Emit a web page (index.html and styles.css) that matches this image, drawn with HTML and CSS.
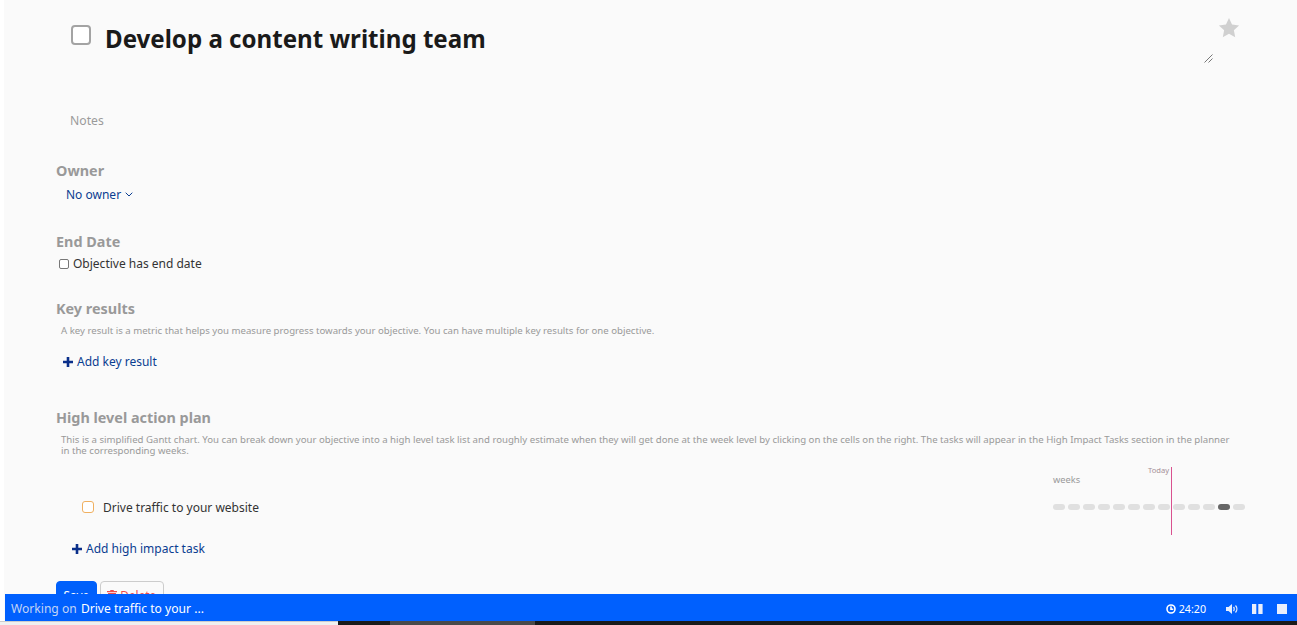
FILE: index.html
```html
<!DOCTYPE html>
<html lang="en">
<head>
<meta charset="utf-8">
<title>Develop a content writing team</title>
<link rel="stylesheet" href="styles.css">
</head>
<body>
<div class="viewport">
  <main class="page">
    <header class="title-row">
      <span class="title-check"></span>
      <h1 class="title">Develop a content writing team</h1>
      <div class="title-side">
        <svg class="star" viewBox="0 0 24 24" width="22" height="22"><path d="M12 1.2l3.3 7.1 7.7.9-5.7 5.3 1.5 7.7L12 18.4l-6.8 3.8 1.5-7.7L1 9.2l7.7-.9z"/></svg>
        <svg class="grip" viewBox="0 0 9 9" width="9" height="9"><path d="M0.5 8.5L8.500 0.5M4.500 8.500L8.500 4.500"/></svg>
      </div>
    </header>
    <p class="notes">Notes</p>

    <section class="owner">
      <h2 class="label">Owner</h2>
      <a class="link owner-link">No owner <svg class="chev" viewBox="0 0 8 5" width="8" height="5"><path d="M0.700 0.700L4 4L7.300 0.700"/></svg></a>
    </section>

    <section class="end-date">
      <h2 class="label">End Date</h2>
      <label class="check-line"><span class="small-check"></span>Objective has end date</label>
    </section>

    <section class="key-results">
      <h2 class="label">Key results</h2>
      <p class="help">A key result is a metric that helps you measure progress towards your objective. You can have multiple key results for one objective.</p>
      <a class="link add add-key"><svg class="plus" viewBox="0 0 10 10" width="10" height="10"><path d="M3.700 0h2.600v3.700H10v2.600H6.300V10H3.700V6.300H0V3.700h3.700z"/></svg>Add key result</a>
    </section>

    <section class="plan">
      <h2 class="label">High level action plan</h2>
      <p class="help help-wide">This is a simplified Gantt chart. You can break down your objective into a high level task list and roughly estimate when they will get done at the week level by clicking on the cells on the right. The tasks will appear in the High Impact Tasks section in the planner in the corresponding weeks.</p>
      <div class="gantt">
        <div class="task">
          <span class="task-check"></span>
          <span class="task-name">Drive traffic to your website</span>
        </div>
        <div class="chart">
          <span class="today">Today</span>
          <span class="today-line"></span>
          <span class="weeks">weeks</span>
          <div class="cells">
            <i class="cell"></i><i class="cell"></i><i class="cell"></i><i class="cell"></i><i class="cell"></i><i class="cell"></i><i class="cell"></i><i class="cell"></i><i class="cell"></i><i class="cell"></i><i class="cell"></i><i class="cell cell-on"></i><i class="cell"></i>
          </div>
        </div>
      </div>
      <a class="link add add-task"><svg class="plus" viewBox="0 0 10 10" width="10" height="10"><path d="M3.700 0h2.600v3.700H10v2.600H6.300V10H3.700V6.300H0V3.700h3.700z"/></svg>Add high impact task</a>
    </section>

    <div class="actions">
      <button class="btn btn-save">Save</button>
      <button class="btn btn-delete"><svg class="trash" viewBox="0 0 10 11" width="10" height="11"><path d="M3.500 0h3l.5 1h3v1.300H0V1h3zM1 3h8l-.6 8H1.600z"/></svg> Delete</button>
    </div>
  </main>

  <footer class="status">
    <div class="working"><span class="working-label">Working on</span> <span class="working-task">Drive traffic to your ...</span></div>
    <div class="controls">
      <span class="timer"><svg class="clock" viewBox="0 0 10 10" width="10" height="10"><circle cx="5" cy="5" r="4"/><path d="M5 2.500V5.300H7.300"/></svg>24:20</span>
      <svg class="ctl-volume" viewBox="0 0 12 10" width="12" height="10"><path class="fill" d="M0 3h2.500L6 0v10L2.500 7H0z"/><path class="wave" d="M7.500 3c.9 1 .9 3 0 4M9.500 1.500c1.800 2 1.800 5 0 7"/></svg>
      <svg class="ctl-pause" viewBox="0 0 11 10" width="11" height="10"><path class="fill" d="M0 0h4.300v10H0zM6.300 0h4.300v10H6.300z"/></svg>
      <svg class="ctl-stop" viewBox="0 0 10 10" width="10" height="10"><path class="fill" d="M0 0h10v10H0z"/></svg>
    </div>
  </footer>

  <div class="taskbar">
    <span class="tb-light"></span>
    <span class="tb-dark"></span>
    <span class="tb-mid"></span>
    <span class="tb-rest"></span>
  </div>
</div>
</body>
</html>
```
FILE: styles.css
```css
* { box-sizing: border-box; }
html, body { margin: 0; padding: 0; height: 100%; overflow: hidden; background: #fff; }
body { font-family: "Noto Sans", "Open Sans", "Liberation Sans", sans-serif; color: #212529; }
.viewport { position: relative; width: 1297px; height: 625px; overflow: hidden; }
.page {
  height: 625px;
  margin-left: 4px;
  padding: 0 52px;
  background: #fafafa;
  overflow: hidden;
}
.title-row { display: flex; align-items: flex-start; height: 92px; padding-left: 15px; }
.title-check {
  flex: none; width: 20px; height: 20px; margin-top: 25px;
  border: 2px solid #a3a3a3; border-radius: 4px; background: #fff;
}
.title {
  margin: 22px 0 0 14px; font-size: 24.100px; line-height: 34px; font-weight: 700; color: #1a1a1a;
}
.title-side { position: relative; margin-left: auto; width: 70px; height: 70px; }
.star { position: absolute; right: 5px; top: 17px; fill: #d0d0d0; }
.grip { position: absolute; left: 29px; top: 54px; fill: none; stroke: #555; stroke-width: 0.8; }
.notes { margin: 0 0 0 14px; height: 58px; padding-top: 20px; font-size: 12.200px; line-height: 17px; color: #9a9a9a; }
.label { margin: 0; font-size: 14.400px; line-height: 19px; font-weight: 700; color: #999; }
.owner { height: 82px; padding-top: 11px; }
.link { color: #0a3d91; font-size: 12px; line-height: 17px; }
.owner-link { display: block; margin: 6px 0 0 10px; }
.chev { fill: none; stroke: #0a3d91; stroke-width: 1; vertical-align: 2px; margin-left: 1px; }
.end-date { height: 67px; }
.check-line { display: flex; align-items: center; margin: 4px 0 0 3px; font-size: 12px; line-height: 17px; color: #333; }
.small-check {
  width: 10px; height: 10px; margin-right: 4px;
  border: 1px solid #777; border-radius: 2px; background: #fff;
}
.help { margin: 7px 0 0 5px; font-size: 9.650px; line-height: 11px; color: #999; }
.help-wide { width: 1175px; }
.key-results { height: 109px; }
.add { display: flex; align-items: center; }
.plus { fill: #0a2f8a; margin-right: 4px; }
.add-key { margin: 17px 0 0 7px; }
.gantt { display: flex; align-items: flex-start; height: 62px; margin-top: 9px; }
.task { display: flex; align-items: center; margin: 34px 0 0 26px; }
.task-check {
  width: 12px; height: 12px; margin: 0 9px 2px 0;
  border: 1px solid #f0b060; border-radius: 3px; background: #fff;
}
.task-name { font-size: 12px; line-height: 17px; color: #333; }
.chart { position: relative; flex: none; margin-left: auto; width: 192px; height: 70px; }
.today { position: absolute; left: 95px; top: 0; font-size: 7.600px; line-height: 10px; color: #a58f98; }
.today-line { position: absolute; left: 118px; top: 2px; width: 1px; height: 68px; background: #d9518f; }
.weeks { position: absolute; left: 0; top: 8px; font-size: 9.300px; line-height: 13px; color: #999; }
.cells { position: absolute; left: 0; top: 39px; display: flex; gap: 3px; }
.cell { display: block; width: 12px; height: 6px; border-radius: 3px; background: #e0e0e0; }
.cell-on { background: #666; }
.add-task { margin: 13px 0 0 16px; }
.actions { display: flex; gap: 3px; margin-top: 24px; }
.btn { height: 28px; padding: 0 6.500px; border-radius: 4px; font-family: inherit; font-size: 11.800px; }
.btn-save { border: 1px solid #0060fb; background: #0060fb; color: #fff; }
.btn-delete { border: 1px solid #ccc; background: #fafafa; color: #ee4d4d; }
.trash { fill: #ee4d4d; vertical-align: -1px; }
.status {
  position: absolute; left: 5px; right: 0; top: 594px; height: 27px;
  display: flex; align-items: center; justify-content: space-between;
  padding: 2px 10px 0 6px;
  background: #0060fe; color: #fff; font-size: 12.100px;
}
.working-label { color: #c3d4f5; }
.working-task { margin-left: 1px; }
.controls { display: flex; align-items: center; gap: 14px; }
.timer { display: flex; align-items: center; gap: 3px; margin-right: 6px; font-size: 10.700px; }
.clock { fill: none; stroke: #fff; stroke-width: 1.600; }
.fill { fill: #e8eefc; }
.wave { fill: none; stroke: #e8eefc; stroke-width: 1.300; }
.taskbar { position: absolute; left: 0; right: 0; top: 621px; height: 4px; display: flex; }
.tb-light { width: 338px; background: #f0f0f0; border-top: 1px solid #ccc; }
.tb-dark { width: 52px; background: #1a1a1a; }
.tb-mid { width: 145px; background: #4a4a4a; }
.tb-rest { flex: 1; background: #1a1a1a; }
```
